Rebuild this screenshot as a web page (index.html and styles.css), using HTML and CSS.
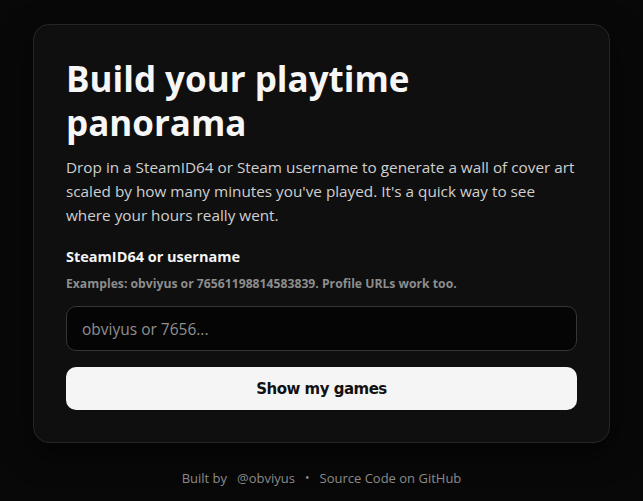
FILE: index.html
```html
<!DOCTYPE html>
<html lang="en">
<head>
<meta charset="utf-8">
<title>Playtime Panorama</title>
<link rel="stylesheet" href="styles.css">
</head>
<body>
<main class="page">
  <section class="card">
    <h1 class="title">Build your playtime panorama</h1>
    <p class="lead">Drop in a SteamID64 or Steam username to generate a wall of cover art scaled by how many minutes you've played. It's a quick way to see where your hours really went.</p>
    <form class="form">
      <label class="label" for="sid">SteamID64 or username</label>
      <p class="hint">Examples: obviyus or 76561198814583839. Profile URLs work too.</p>
      <input class="input" id="sid" type="text" placeholder="obviyus or 7656...">
      <button class="button" type="button">Show my games</button>
    </form>
  </section>
  <footer class="footer">
    <span>Built by</span>
    <a class="link" href="#">@obviyus</a>
    <span class="dot">•</span>
    <a class="link" href="#">Source Code on GitHub</a>
  </footer>
</main>
</body>
</html>
```
FILE: styles.css
```css
* { box-sizing: border-box; }
html, body { margin: 0; padding: 0; background: #080808; }
body {
  font-family: "Open Sans", "Noto Sans", sans-serif;
  color: #f4f4f4;
}
.page {
  display: flex;
  flex-direction: column;
  align-items: center;
  padding-top: 24px;
}
.card {
  width: 577px;
  background: #0f0f0f;
  border: 1px solid #262626;
  border-radius: 16px;
  padding: 32px 32px 32px;
  box-shadow: 0 10px 30px rgba(0,0,0,0.6);
}
.title {
  margin: 0;
  font-size: 35px;
  line-height: 44px;
  font-weight: 700;
  color: #f6f6f6;
}
.lead {
  margin: 10px 0 0;
  font-size: 15.3px;
  line-height: 24px;
  color: #cfcfcf;
}
.form {
  display: flex;
  flex-direction: column;
  margin-top: 20px;
}
.label {
  font-size: 14.5px;
  font-weight: 700;
  line-height: 20px;
  color: #f4f4f4;
}
.hint {
  margin: 8px 0 0;
  font-size: 12.2px;
  font-weight: 700;
  line-height: 18px;
  color: #8d8d8d;
}
.input {
  margin-top: 13px;
  height: 45px;
  width: 100%;
  background: #050505;
  border: 1px solid #363636;
  border-radius: 10px;
  padding: 0 15px;
  font-family: "Open Sans", sans-serif;
  font-size: 15.5px;
  color: #eee;
  outline: none;
}
.input::placeholder { color: #8f8f8f; }
.button {
  margin-top: 16px;
  height: 43px;
  width: 100%;
  border: none;
  border-radius: 10px;
  background: #f5f5f5;
  color: #111;
  font-family: "DejaVu Sans", sans-serif;
  font-size: 15px;
  letter-spacing: -0.5px;
  font-weight: 700;
  cursor: pointer;
}
.footer {
  margin-top: 26px;
  display: flex;
  gap: 10px;
  font-size: 13px;
  color: #8a8a8a;
}
.link { color: #8a8a8a; text-decoration: none; }
.dot { font-size: 12px; line-height: 18px; }
```
